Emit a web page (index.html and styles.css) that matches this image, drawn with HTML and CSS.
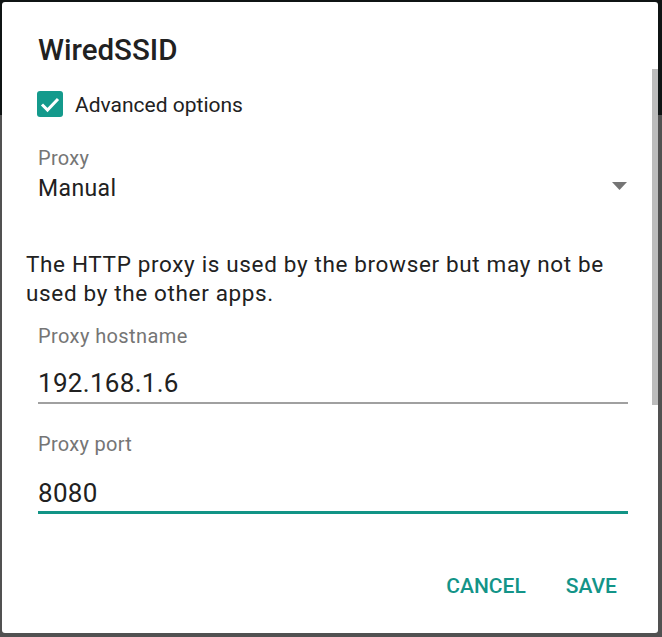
FILE: index.html
```html
<!DOCTYPE html>
<html>
<head>
<meta charset="utf-8">
<link rel="stylesheet" href="styles.css">
</head>
<body>
<div class="dialog">
  <div class="scrollbar"></div>
  <h1 class="title">WiredSSID</h1>
  <div class="check-row">
    <svg class="checkbox" width="26" height="26" viewBox="0 0 26 26">
      <rect x="0" y="0" width="26" height="26" rx="3" fill="#149a8c"/>
      <path d="M5 13.5 L10.5 19 L21 8" fill="none" stroke="#ffffff" stroke-width="3"/>
    </svg>
    <span class="check-label">Advanced options</span>
  </div>
  <div class="label proxy-label">Proxy</div>
  <div class="spinner">
    <span class="spinner-value">Manual</span>
    <svg class="arrow" width="15" height="8" viewBox="0 0 15 8"><polygon points="0,0 15,0 7.5,8" fill="#757575"/></svg>
  </div>
  <p class="note">The HTTP proxy is used by the browser but may not be used by the other apps.</p>
  <div class="label host-label">Proxy hostname</div>
  <div class="input">192.168.1.6</div>
  <div class="label port-label">Proxy port</div>
  <div class="input focused">8080</div>
  <div class="actions">
    <span class="btn">CANCEL</span>
    <span class="btn">SAVE</span>
  </div>
</div>
</body>
</html>
```

FILE: styles.css
```css
html, body {
  margin: 0;
  padding: 0;
}
body {
  width: 662px;
  height: 637px;
  overflow: hidden;
  background: linear-gradient(#0f1414 0, #0f1414 115px, #515151 115px, #515151 100%);
  font-family: Roboto, "Liberation Sans", sans-serif;
  color: #212121;
}
.dialog {
  position: relative;
  margin: 2px 4px 0 2px;
  width: 656px;
  height: 631px;
  box-sizing: border-box;
  background: #ffffff;
  border-radius: 3px;
  padding: 30px 30px 0 36px;
}
.scrollbar {
  position: absolute;
  right: 0;
  top: 67px;
  width: 6px;
  height: 336px;
  background: #bcbcbc;
}
.title {
  margin: 0;
  font-size: 29.5px;
  line-height: 36px;
  font-weight: 500;
  color: #212121;
}
.check-row {
  display: flex;
  align-items: center;
  margin-top: 23px;
  height: 26px;
}
.checkbox {
  display: block;
  margin-left: -1px;
}
.check-label {
  margin-left: 12px;
  font-size: 21px;
  line-height: 26px;
  padding-top: 2px;
}
.label {
  font-size: 20px;
  line-height: 24px;
  letter-spacing: 0.3px;
  color: #757575;
}
.host-label {
  letter-spacing: 0.4px;
}
.proxy-label {
  margin-top: 29px;
}
.spinner {
  display: flex;
  align-items: center;
  justify-content: space-between;
  margin-top: 5px;
  height: 28px;
}
.spinner-value {
  font-size: 23px;
  line-height: 28px;
  letter-spacing: 0.4px;
}
.arrow {
  display: block;
  margin-right: 1px;
  margin-top: -6px;
}
.note {
  margin: 47px 14px 0 -12px;
  font-size: 22.5px;
  line-height: 29px;
  letter-spacing: 0.65px;
  color: #212121;
}
.host-label {
  margin-top: 16px;
}
.input {
  margin-top: 20px;
  font-size: 26px;
  line-height: 30px;
  letter-spacing: 0.3px;
  padding-bottom: 4px;
  border-bottom: 2px solid #a0a0a0;
}
.port-label {
  margin-top: 28px;
}
.input.focused {
  margin-top: 22px;
  padding-bottom: 3px;
  border-bottom: 3px solid #129486;
}
.actions {
  display: flex;
  justify-content: flex-end;
  gap: 40px;
  margin-top: 60px;
  margin-right: 11px;
}
.btn {
  font-size: 21px;
  line-height: 24px;
  font-weight: 500;
  color: #139488;
}
```
